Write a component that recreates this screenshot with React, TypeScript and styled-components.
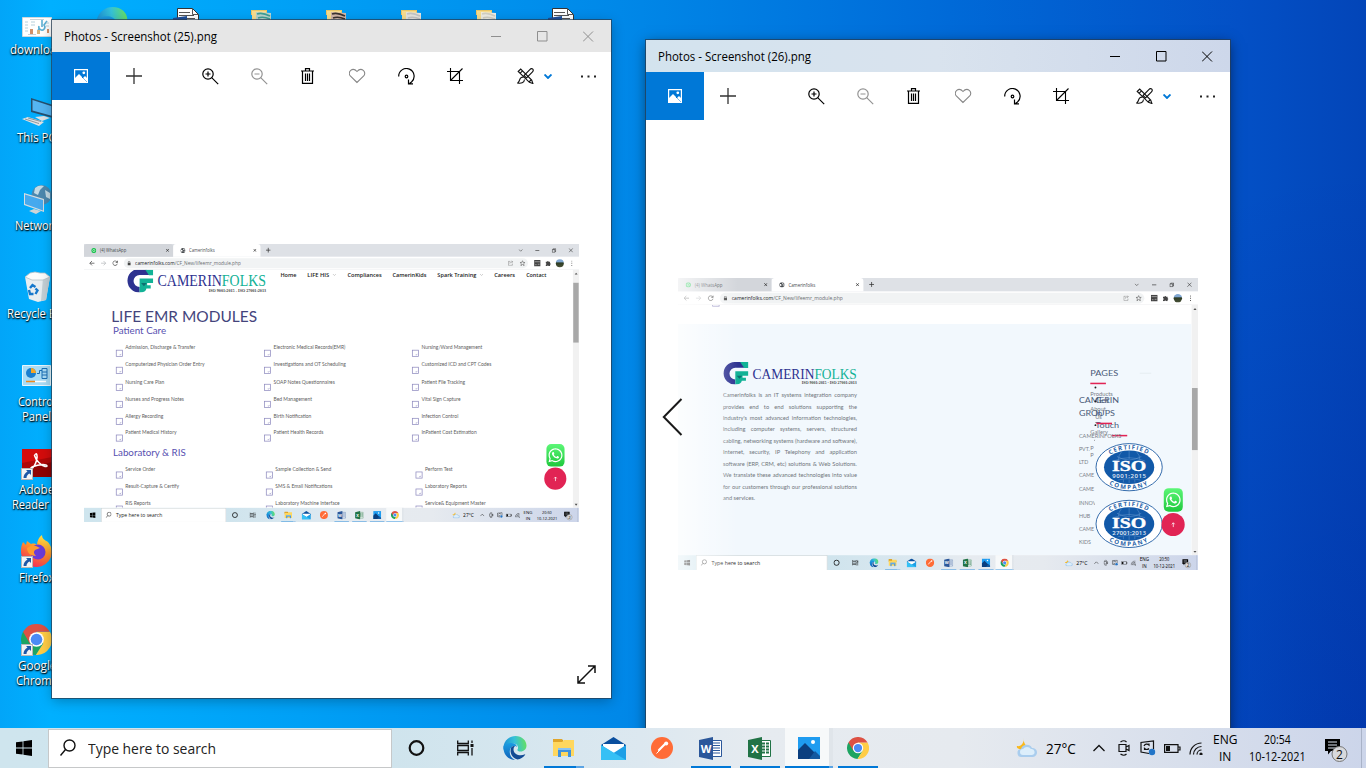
import React, { useLayoutEffect, useRef } from "react";
import styled, { createGlobalStyle, css } from "styled-components";
import { FaWhatsapp } from "react-icons/fa";

const ui = `"Open Sans", "Noto Sans", sans-serif`;
const web = `Lato, "Open Sans", sans-serif`;

const GlobalStyle = createGlobalStyle`
  * { box-sizing: border-box; }
  body { margin: 0; overflow: hidden; font-family: ${ui}; color: #000; }
  svg { display: block; flex: none; }
`;

/* ---------- text squeezed to a known width ---------- */

const FitBox = styled.span<{ $w: number }>`
  display: block;
  flex: none;
  width: ${(p) => p.$w}px;
  white-space: nowrap;
`;
const FitInner = styled.span`
  display: inline-block;
  transform-origin: 0 50%;
`;

function Fit({ w, children }: { w: number; children: React.ReactNode }) {
  const ref = useRef<HTMLSpanElement>(null);
  useLayoutEffect(() => {
    const el = ref.current;
    if (el && el.offsetWidth) el.style.transform = `scaleX(${w / el.offsetWidth})`;
  }, [w]);
  return (
    <FitBox $w={w}>
      <FitInner ref={ref}>{children}</FitInner>
    </FitBox>
  );
}

/* ---------- app icons ---------- */

const Svg = styled.svg.attrs({ fill: "none" })<{ $s?: number }>`
  ${(p) => p.$s && css`width: ${p.$s}px; height: ${p.$s}px;`}
`;

const ChromeIcon = ({ s }: { s: number }) => (
  <Svg $s={s} viewBox="0 0 48 48">
    <path fill="#1da462" d="M3.2 12A24 24 0 0 0 23 48L34.4 30 24 24Z" />
    <path fill="#ffcd46" d="M44.8 12A24 24 0 0 1 23 48L34.4 30 24 12Z" />
    <path fill="#dd5144" d="M3.2 12A24 24 0 0 1 44.8 12H24L13.6 30Z" />
    <circle cx="24" cy="24" r="11.4" fill="#fff" />
    <circle cx="24" cy="24" r="9" fill="#4c8bf5" />
  </Svg>
);

const EdgeIcon = ({ s }: { s: number }) => (
  <Svg $s={s} viewBox="0 0 48 48">
    <defs>
      <linearGradient id="edgeTop" x1="0" y1=".5" x2="1" y2=".4">
        <stop offset="0" stopColor="#1b8fd6" />
        <stop offset=".5" stopColor="#35c1d8" />
        <stop offset="1" stopColor="#66e060" />
      </linearGradient>
      <linearGradient id="edgeLow" x1="0" y1="0" x2="0" y2="1">
        <stop offset="0" stopColor="#1b9de2" />
        <stop offset="1" stopColor="#1060b8" />
      </linearGradient>
    </defs>
    <path fill="url(#edgeTop)" d="M1 20C4 7 14 0 25 0c13 0 22 9 22 19 0 7-5 12-12 12-5 0-7-2-6-4 3-4 0-12-9-12C11 15 4 19 1 28Z" />
    <path fill="url(#edgeLow)" d="M1 21C0 37 11 48 24 48c-9-4-13-14-9-23 2-4 5-5 8-5 2 0 4 1 5 2-1-5-5-8-11-8C9 14 3 17 1 21Z" />
    <path fill="#124a94" d="M16 24c-3 9 2 20 13 23 6-1 11-4 15-9 1-2 0-2-1-1-9 4-22 0-22-10 0-3 1-5 3-7-4 0-7 1-8 4Z" />
  </Svg>
);

const ExplorerIcon = () => (
  <Svg width="22" height="20" viewBox="0 0 22 20">
    <path fill="#d99a12" d="M0 1h9l2 3h10v4H0Z" />
    <path fill="#ffd75e" d="M0 4h9l2-2h10v16H0Z" />
    <path fill="#e0a52a" d="M0 1h9v3H0Z" />
    <path fill="#3f92dd" d="M5 10h13v9h-3v-5H8v5H5Z" />
    <path fill="#8ac4f2" d="M5 10h13v2H5Z" />
  </Svg>
);

const MailIcon = () => (
  <Svg width="25" height="23" viewBox="0 0 25 23">
    <path fill="#0a4f9e" d="M12.500 0 25 8v2L12.500 17 0 10V8Z" />
    <path fill="#fff" d="M2 7h21v4l-10.500 6L2 11Z" />
    <path fill="#1d9fe6" d="M0 8l12.500 8L25 8v15H0Z" />
    <path fill="#35c0f5" d="M0 8l25 15H0Z" />
  </Svg>
);

const PostmanIcon = () => (
  <Svg width="22" height="22" viewBox="0 0 22 22">
    <circle cx="11" cy="11" r="11" fill="#ff6c37" />
    <path stroke="#fff" strokeWidth="2.200" strokeLinecap="round" d="m8 13 6-6" />
    <circle cx="15.200" cy="6.500" r="2" fill="#fff" />
    <path stroke="#fff" strokeWidth="1" d="m5.500 16.500 4-4" />
  </Svg>
);

const OfficeIcon = ({ color, letter }: { color: string; letter: string }) => (
  <Svg width="24" height="23" viewBox="0 0 24 23">
    <path fill="#fff" stroke={color} d="M12 3.500h10.500v16H12Z" />
    {letter === "X" ? (
      <path stroke={color} strokeWidth="1.800" strokeDasharray="3 1" d="M14 6.500h8M14 9.500h8M14 12.500h8M14 15.500h8" />
    ) : (
      <path stroke={color} d="M14 6h7M14 8.500h7M14 11h7M14 13.500h7M14 16h7" />
    )}
    <path fill={color} d="m0 3 14-3v23L0 20Z" />
    <text x="7" y="15.500" fill="#fff" fontFamily="Open Sans" fontSize="11" fontWeight="700" textAnchor="middle">
      {letter}
    </text>
  </Svg>
);

const PhotosIcon = () => (
  <Svg width="22" height="22" viewBox="0 0 22 22">
    <rect width="22" height="22" fill="#1f9cf0" />
    <path fill="#0b3f7f" d="m0 13 7-7 15 15v1H0Z" />
    <path fill="#14599f" d="m11 22 6-8 5 5v3Z" />
    <circle cx="15" cy="5" r="2" fill="#fff" />
  </Svg>
);

const WindowsIcon = () => (
  <Svg width="16" height="16" viewBox="0 0 16 16">
    <path fill="#000" d="m0 2.300 6.600-.9v6.200H0ZM7.400 1.200 16 0v7.600H7.400ZM0 8.400h6.600v6.200L0 13.700ZM7.400 8.400H16V16l-8.600-1.200Z" />
  </Svg>
);

/* ---------- taskbar ---------- */

const Bar = styled.div`
  display: flex;
  height: 40px;
  width: 1366px;
  flex: none;
  position: relative;
  font-family: ${ui};
  color: #000;
  background: linear-gradient(90deg, #cfe5ee 0, #cfe4ed 390px, #dce8f0 640px, #e6ebf0 760px, #e6eaef 960px, #d8dfec 1180px, #ccd5ea 1366px);
`;
const StartCell = styled.div`
  width: 48px;
  display: grid;
  place-items: center;
`;
const Search = styled.div`
  width: 344px;
  height: 39px;
  margin-top: 1px;
  background: #fff;
  border: 1px solid #c6c8c9;
  display: flex;
  align-items: center;
  padding: 0 0 2px 11px;
  gap: 12px;
  font-size: 15px;
  color: #222;
`;
const Apps = styled.div`
  display: flex;
  gap: 1px;
  flex: 1;
  padding-left: 1px;
`;
const AppCell = styled.div<{ $open?: boolean; $active?: boolean; $stack?: boolean }>`
  width: 48px;
  display: grid;
  place-items: center;
  position: relative;
  background: ${(p) => (p.$active ? "linear-gradient(90deg, #f7f9fa 44px, #e0e5ea 44px)" : "none")};
  &::after {
    content: "";
    display: ${(p) => (p.$open ? "block" : "none")};
    position: absolute;
    bottom: 0;
    left: ${(p) => (p.$active ? 0 : 4)}px;
    width: ${(p) => (p.$active ? 48 : 40)}px;
    height: 2px;
    background: ${(p) => (p.$active ? "linear-gradient(90deg,#0078d7 44px,#5ba4e4 44px)" : p.$stack ? "linear-gradient(90deg,#0078d7 32px,#5ba4e4 32px)" : "#0078d7")};
  }
`;
const Tray = styled.div`
  display: flex;
  align-items: center;
  width: 350px;
  font-size: 14px;
`;
const Gap = styled.span<{ $w: number }>`
  flex: none;
  width: ${(p) => p.$w}px;
`;
const Stack = styled.div<{ $w: number }>`
  width: ${(p) => p.$w}px;
  display: flex;
  flex-direction: column;
  align-items: center;
  font-size: 12px;
  line-height: 17px;
`;
const DesktopEdge = styled.span`
  width: 1px;
  height: 40px;
  margin-left: 11px;
  background: #a9b3c8;
`;

function Taskbar({ time, active }: { time: string; active: "photos" | "chrome" }) {
  return (
    <Bar>
      <StartCell>
        <WindowsIcon />
      </StartCell>
      <Search>
        <Svg width="16" height="18" viewBox="0 0 16 18" stroke="#111" strokeWidth="1.400">
          <circle cx="9.500" cy="6.500" r="5.500" />
          <path d="M5.500 10.500 .5 16.500" />
        </Svg>
        <Fit w={128}>Type here to search</Fit>
      </Search>
      <Apps>
        <AppCell>
          <Svg width="18" height="18" viewBox="0 0 18 18">
            <circle cx="8.500" cy="9" r="6.800" stroke="#111" strokeWidth="2.200" />
          </Svg>
        </AppCell>
        <AppCell>
          <Svg width="19" height="16" viewBox="0 0 19 16" stroke="#111" strokeWidth="1.300">
            <path d="M.7.500v3h10.600v-3M.7 15.500v-3h10.600v3M.7 5.500h10.600v5H.7ZM15 .500V3M15 8v7.500" />
            <path strokeWidth="3" d="M15 4v3" />
          </Svg>
        </AppCell>
        <AppCell>
          <EdgeIcon s={24} />
        </AppCell>
        <AppCell $open $stack>
          <ExplorerIcon />
        </AppCell>
        <AppCell>
          <MailIcon />
        </AppCell>
        <AppCell>
          <PostmanIcon />
        </AppCell>
        <AppCell $open>
          <OfficeIcon color="#2b579a" letter="W" />
        </AppCell>
        <AppCell $open>
          <OfficeIcon color="#217346" letter="X" />
        </AppCell>
        <AppCell $open $active={active === "photos"}>
          <PhotosIcon />
        </AppCell>
        <AppCell $open $active={active === "chrome"}>
          <ChromeIcon s={22} />
        </AppCell>
      </Apps>
      <Tray>
        <Svg width="22" height="20" viewBox="0 0 22 20">
          <path fill="#f9b81c" d="M8 0c-1 5 2 9 7 9-2 3-6 4-9 3S0 10 1 8c4 1 7-3 7-8Z" />
          <path fill="#a9cdee" d="M6 19a4 4 0 0 1-1-8 6 6 0 0 1 11-1 4.500 4.500 0 0 1 1 9Z" />
          <path fill="#dceefb" d="M7 17a3 3 0 0 1 0-6 5 5 0 0 1 8 0 3 3 0 0 1 1 6Z" />
        </Svg>
        <Gap $w={8} />
        <Fit w={30}>27°C</Fit>
        <Gap $w={17} />
        <Svg width="12" height="8" viewBox="0 0 12 8" stroke="#111" strokeWidth="1.300">
          <path d="m.5 7 5.500-5.500L11.500 7" />
        </Svg>
        <Gap $w={13} />
        <Svg width="12" height="16" viewBox="0 0 12 16" stroke="#111" strokeWidth="1.200">
          <path d="M1 4.500h7v7H1ZM8 7l3-1.500v5L8 9M2.500 2Q6-.5 8.500 2M2.500 14Q6 16.500 8.500 14" />
        </Svg>
        <Gap $w={9} />
        <Svg width="17" height="16" viewBox="0 0 17 16">
          <path stroke="#111" strokeWidth="1.200" d="M10 13.500 2 12V2.500L14.500 1v8M5 6a3 3 0 0 1 5-1V3.500M10 8.500a3 3 0 0 1-4.500 0v1.500" />
          <circle cx="13" cy="12" r="3.200" fill="#2275c8" />
        </Svg>
        <Gap $w={8} />
        <Svg width="17" height="9" viewBox="0 0 17 9">
          <path stroke="#111" strokeWidth="1.200" d="M.6.6H14v7.800H.6ZM14 3h2v3h-2" />
          <path fill="#111" d="M2 2h4v5H2Z" />
        </Svg>
        <Gap $w={8} />
        <Svg width="14" height="13" viewBox="0 0 14 13" stroke="#111" strokeWidth="1.200">
          <path d="M1 12.500A11.500 11.500 0 0 1 12.500 1M4.500 12.500a8 8 0 0 1 8-8M8 12.500A4.500 4.500 0 0 1 12.500 8" />
          <circle cx="12" cy="12" r="1" fill="#111" />
        </Svg>
        <Gap $w={8} />
        <Stack $w={28}>
          <Fit w={24}>ENG</Fit>
          <Fit w={12}>IN</Fit>
        </Stack>
        <Gap $w={7} />
        <Stack $w={62}>
          <Fit w={27}>{time}</Fit>
          <Fit w={57}>10-12-2021</Fit>
        </Stack>
        <Gap $w={16} />
        <Svg width="26" height="20" viewBox="0 0 26 20" overflow="visible">
          <path fill="#000" d="M1 1h15v12H7l-3 3.500V13H1Z" />
          <path stroke="#dbe2ee" d="M4 4h9M4 7h9M4 10h9" />
          <circle cx="15.500" cy="16" r="7.500" fill="#d8d9dc" stroke="#777" />
          <text x="15.500" y="20.500" fontFamily="Open Sans" fontSize="12" textAnchor="middle" fill="#111">
            2
          </text>
        </Svg>
        <DesktopEdge />
      </Tray>
    </Bar>
  );
}

/* ---------- browser capture shown inside the photo windows ---------- */

const Frame = styled.div<{ $k: number }>`
  width: ${(p) => 1366 * p.$k}px;
  height: ${(p) => 768 * p.$k}px;
  overflow: hidden;
  position: relative;
  flex: none;
`;
const Shot = styled.div<{ $k: number }>`
  width: 1366px;
  height: 768px;
  display: flex;
  flex-direction: column;
  background: #fff;
  transform: scale(${(p) => p.$k});
  transform-origin: 0 0;
`;
const SideFade = styled.div`
  position: absolute;
  inset: 0 auto 0 0;
  width: 60px;
  background: linear-gradient(90deg, rgba(255, 255, 255, 0.75), rgba(255, 255, 255, 0));
`;
const TabStrip = styled.div`
  height: 35px;
  flex: none;
  display: flex;
  align-items: stretch;
  background: #dee1e6;
  font-size: 13px;
  color: #45494d;
`;
const Tab = styled.div<{ $on?: boolean }>`
  width: ${(p) => (p.$on ? 241 : 246)}px;
  display: flex;
  align-items: center;
  gap: 10px;
  padding: 0 11px 0 20px;
  background: ${(p) => (p.$on ? "#fff" : "#d3d6db")};
  border-radius: 8px 8px 0 0;
  & > :last-child { margin-left: auto; }
`;
const StripButtons = styled.div`
  margin-left: auto;
  padding-right: 16px;
  display: flex;
  align-items: center;
  gap: 34px;
`;
const UrlBar = styled.div`
  height: 36px;
  flex: none;
  display: flex;
  align-items: center;
  padding: 0 18px 0 14px;
  gap: 16px;
  border-bottom: 1px solid #e4e6e8;
`;
const Extensions = styled.div`
  display: flex;
  align-items: center;
  gap: 13px;
  & > :last-child { margin-left: 7px; }
`;
const Pill = styled.div`
  flex: 1;
  height: 28px;
  margin: 0 1px 0 0;
  border-radius: 14px;
  background: #f1f3f4;
  display: flex;
  align-items: center;
  padding: 0 7px 0 10px;
  gap: 12px;
  font-size: 14px;
  color: #6a6e72;
  b { font-weight: 400; color: #202124; }
  & > :nth-child(3) { margin: 0 6px 0 auto; }
`;
const Avatar = styled.span`
  width: 22px;
  height: 22px;
  border-radius: 50%;
  background: linear-gradient(#7fa6d0 35%, #2b3a22 45%, #4a5238);
`;
const Body = styled.div`
  flex: 1;
  min-height: 0;
  display: flex;
  position: relative;
  overflow: hidden;
`;
const Page = styled.div`
  flex: 1;
  font-family: ${web};
  overflow: hidden;
  position: relative;
`;
const Rail = styled.div`
  width: 17px;
  background: #f1f1f1;
  display: flex;
  flex-direction: column;
  align-items: center;
`;
const Thumb = styled.div<{ $top: number; $h: number }>`
  width: 15px;
  margin-top: ${(p) => p.$top}px;
  height: ${(p) => p.$h}px;
  background: #a8a8a8;
`;
const Arrow = styled.span<{ $down?: boolean }>`
  border: 4px solid transparent;
  border-${(p) => (p.$down ? "top" : "bottom")}: 5px solid #505050;
  height: 0;
  margin: ${(p) => (p.$down ? "auto 0 2px" : "4px 0 0")};
`;
const Floating = styled.div`
  position: absolute;
  left: 1270px;
  top: 481px;
  display: flex;
  flex-direction: column;
  align-items: center;
  gap: 3px;
`;
const WhatsAppTile = styled.div`
  width: 50px;
  height: 62px;
  border-radius: 13px;
  background: linear-gradient(#5cf777, #1fc83c);
  display: grid;
  place-items: center;
  color: #fff;
  font-size: 44px;
`;
const UpButton = styled.div`
  width: 61px;
  height: 61px;
  border-radius: 50%;
  background: #e12454;
  display: grid;
  place-items: center;
`;

const X = ({ c = "#222" }: { c?: string }) => (
  <Svg width="9" height="9" viewBox="0 0 9 9" stroke={c} strokeWidth="1.800">
    <path d="m.5.500 8 8M8.500.500l-8 8" />
  </Svg>
);

interface CaptureProps {
  k: number;
  thumbTop: number;
  thumbH: number;
  children: React.ReactNode;
}

function Capture({ k, thumbTop, thumbH, children }: CaptureProps) {
  return (
    <Shot $k={k}>
      <TabStrip>
        <Tab>
          <Svg width="14" height="14" viewBox="0 0 14 14">
            <circle cx="7" cy="7" r="7" fill="#16c24a" />
            <circle cx="7" cy="7" r="3" stroke="#fff" strokeWidth="1.500" />
          </Svg>
          <Fit w={73}>(4) WhatsApp</Fit>
          <X />
        </Tab>
        <Tab $on>
          <Svg width="14" height="14" viewBox="0 0 14 14">
            <circle cx="7" cy="7" r="7" fill="#4a4e52" />
            <path fill="#fff" d="M2 5c3 0 4 1 4 3S4 9 4 11C2 9 1 7 2 5ZM8 2c2 0 4 2 4 4-2 1-4 0-4-1s-1-2 0-3ZM9 8h3l-2 4Z" />
          </Svg>
          <Fit w={71}>Camerinfolks</Fit>
          <X />
        </Tab>
        <Gap $w={15} />
        <Svg width="13" height="35" viewBox="0 0 13 35" stroke="#333" strokeWidth="2">
          <path d="M0 17h13M6.500 10.500v13" />
        </Svg>
        <StripButtons>
          <Svg width="12" height="8" viewBox="0 0 12 8" stroke="#444" strokeWidth="1.600">
            <path d="m1 1 5 5 5-5" />
          </Svg>
          <Svg width="12" height="8" viewBox="0 0 12 8" stroke="#222" strokeWidth="1.600">
            <path d="M0 4h12" />
          </Svg>
          <Svg width="12" height="12" viewBox="0 0 12 12" stroke="#222" strokeWidth="1.600">
            <path d="M1 3.500h7.500V11H1ZM3.500 3V1H11v7.500H9" />
          </Svg>
          <Svg width="13" height="13" viewBox="0 0 13 13" stroke="#222" strokeWidth="1.400">
            <path d="m1 1 11 11M12 1 1 12" />
          </Svg>
        </StripButtons>
      </TabStrip>
      <UrlBar>
        <Svg width="16" height="16" viewBox="0 0 16 16" stroke="#444" strokeWidth="2">
          <path d="M15 8H2M8 2 2 8l6 6" />
        </Svg>
        <Svg width="16" height="16" viewBox="0 0 16 16" stroke="#b5b8bb" strokeWidth="2">
          <path d="M1 8h13M8 2l6 6-6 6" />
        </Svg>
        <Svg width="16" height="16" viewBox="0 0 16 16" stroke="#444" strokeWidth="2">
          <path d="M13.500 5A6.300 6.300 0 1 0 14 9.500M14.500 1v5h-5" />
        </Svg>
        <Pill>
          <Svg width="9" height="12" viewBox="0 0 9 12">
            <path fill="#444" d="M0 5h9v7H0Z" />
            <path stroke="#444" strokeWidth="1.500" d="M2 5V3a2.500 2.500 0 0 1 5 0v2" />
          </Svg>
          <Fit w={292}>
            <b>camerinfolks.com</b>/CF_New/lifeemr_module.php
          </Fit>
          <Svg width="14" height="15" viewBox="0 0 14 15" stroke="#777" strokeWidth="1.400">
            <path d="M6 3H1v11h11V9M5 9c0-4 3-5 8-5M10 1l3 3-3 3" />
          </Svg>
          <Svg width="16" height="16" viewBox="0 0 16 16" stroke="#555" strokeWidth="1.500">
            <path d="m8 1 2 5h5l-4 3.500L12.500 15 8 11.500 3.500 15 5 9.500 1 6h5Z" />
          </Svg>
        </Pill>
        <Extensions>
          <Svg width="18" height="18" viewBox="0 0 18 18">
            <path fill="#444" d="M0 0h18v18H0Z" />
            <path stroke="#ddd" strokeWidth="1.500" d="M2 5h14M3 13h4M10 12h5" />
          </Svg>
          <Svg width="16" height="16" viewBox="0 0 16 16">
            <path fill="#444" d="M1 4h4a2 2 0 1 1 4 0h4v4a2 2 0 1 1 0 4v4H9a2 2 0 1 0-4 0H1v-4a2 2 0 1 0 0-4Z" />
          </Svg>
          <Avatar />
          <Svg width="4" height="16" viewBox="0 0 4 16">
            <path fill="#555" d="M1 1h2.500v2.500H1ZM1 7h2.500v2.500H1ZM1 13h2.500v2.500H1Z" />
          </Svg>
        </Extensions>
      </UrlBar>
      <Body>
        <Page>{children}</Page>
        <Rail>
          <Arrow />
          <Thumb $top={thumbTop} $h={thumbH} />
          <Arrow $down />
        </Rail>
        <Floating>
          <WhatsAppTile>
            <FaWhatsapp />
          </WhatsAppTile>
          <UpButton>
            <Svg width="12" height="14" viewBox="0 0 12 14" stroke="#fff" strokeWidth="2">
              <path d="M6 14V2M2 6l4-4 4 4" />
            </Svg>
          </UpButton>
        </Floating>
      </Body>
      <Taskbar time="20:50" active="chrome" />
    </Shot>
  );
}

/* ---------- Camerinfolks logo ---------- */

const LogoRow = styled.div<{ $k: number }>`
  display: flex;
  font-family: "Liberation Serif", serif;
  gap: ${(p) => 12 * p.$k}px;
`;
const LogoText = styled.div<{ $k: number }>`
  display: flex;
  flex-direction: column;
  align-items: flex-end;
  padding-top: ${(p) => 15 * p.$k}px;
  font-size: ${(p) => 44 * p.$k}px;
  line-height: ${(p) => 40 * p.$k}px;
  color: #2d3290;
  i { font-style: normal; color: #12b296; }
`;
const IsoLine = styled.div<{ $k: number }>`
  font-size: ${(p) => 13 * p.$k}px;
  line-height: ${(p) => 10 * p.$k}px;
  font-weight: 700;
  color: #444;
`;

const Logo = ({ k }: { k: number }) => (
  <LogoRow $k={k}>
    <Svg width={73 * k} height={66 * k} viewBox="0 0 74 66">
      <path fill="#2d3290" d="M34 0H56L63 17H36A17 17 0 1 0 36 51V66A33 33 0 1 1 34 0Z" />
      <path fill="#12b296" d="M50 0H74V18H62Z" />
      <path fill="#12b296" d="M36 27H74V40H57V46H67V55H55C54 62 48 66 36 66V52Z" />
      <path fill="#0b6f70" d="M40 40h16l-8 9Z" />
    </Svg>
    <LogoText $k={k}>
      <Fit w={299 * k}>
        CAMERIN<i>FOLKS</i>
      </Fit>
      <IsoLine $k={k}>
        <Fit w={158 * k}>ISO 9001:2015 - ISO 27001:2013</Fit>
      </IsoLine>
    </LogoText>
  </LogoRow>
);

/* ---------- modules page ---------- */

const SiteHeader = styled.div`
  display: flex;
  padding-left: 118px;
  height: 64px;
  margin-top: -3px;
`;
const Nav = styled.nav`
  display: flex;
  height: 20px;
  margin: 8px 0 0 40px;
  align-items: center;
  font: 600 16px/20px ${ui};
  color: #222;
  white-space: nowrap;
`;
const PageTitle = styled.h1`
  margin: 41px 0 0 75px;
  font: 400 42px/50px ${web};
  color: #44447c;
`;
const Section = styled.h2<{ $top: number }>`
  margin: ${(p) => p.$top}px 0 0 80px;
  font: 400 25px/24px ${web};
  color: #5750b0;
`;
const ModuleGrid = styled.div<{ $cols: string; $rows: string; $top: number }>`
  display: grid;
  grid-template-columns: ${(p) => p.$cols};
  grid-template-rows: ${(p) => p.$rows};
  margin-top: ${(p) => p.$top}px;
  padding-left: 88px;
`;
const Module = styled.div`
  display: flex;
  align-items: center;
  font-size: 13.700px;
  color: #606060;
  white-space: nowrap;
`;
const Tick = styled.span`
  width: 19px;
  height: 19px;
  border: 2px solid #8d89be;
  margin: 32px 7px 0 0;
  display: grid;
  place-items: end;
  padding: 1px;
`;

const patientCare = [
  "Admission, Discharge & Transfer", "Electronic Medical Records(EMR)", "Nursing/Ward Management",
  "Computerized Physician Order Entry", "Investigations and OT Scheduling", "Customized ICD and CPT Codes",
  "Nursing Care Plan", "SOAP Notes Questionnaires", "Patient File Tracking",
  "Nurses and Progress Notes", "Bed Management", "Vital Sign Capture",
  "Allergy Recording", "Birth Notification", "Infection Control",
  "Patient Medical History", "Patient Health Records", "InPatient Cost Estimation",
];
const laboratory = [
  "Service Order", "Sample Collection & Send", "Perform Test",
  "Result-Capture & Certify", "SMS & Email Notifications", "Laboratory Reports",
  "RIS Reports", "Laboratory Machine Interface", "Service& Equipment Master",
];

const Modules = ({ items }: { items: string[] }) => (
  <>
    {items.map((name) => (
      <Module key={name}>
        <Tick>
          <Svg width="7" height="6" viewBox="0 0 8 7" stroke="#5a55a0" strokeWidth="1.500">
            <path d="m1 4 2 2 4-5" />
          </Svg>
        </Tick>
        {name}
      </Module>
    ))}
  </>
);

const Caret = () => (
  <Svg width="20" height="8" viewBox="0 0 20 8" stroke="#aaa" strokeWidth="1.600">
    <path d="m10 1 4 4 4-4" />
  </Svg>
);

const ModulesPage = () => (
  <>
    <SiteHeader>
      <Logo k={1} />
      <Nav>
        <Fit w={44}>Home</Fit>
        <Gap $w={30} />
        <Fit w={61}>LIFE HIS</Fit>
        <Caret />
        <Gap $w={30} />
        <Fit w={94}>Compliances</Fit>
        <Gap $w={30} />
        <Fit w={94}>CamerinKids</Fit>
        <Gap $w={30} />
        <Fit w={108}>Spark Training</Fit>
        <Caret />
        <Gap $w={29} />
        <Fit w={57}>Careers</Fit>
        <Gap $w={31} />
        <Fit w={56}>Contact</Fit>
      </Nav>
    </SiteHeader>
    <PageTitle>
      <Fit w={402}>LIFE EMR MODULES</Fit>
    </PageTitle>
    <Section $top={4}>
      <Fit w={147}>Patient Care</Fit>
    </Section>
    <ModuleGrid $top={11} $cols="409px 408px 1fr" $rows="repeat(5, 47px) 44px">
      <Modules items={patientCare} />
    </ModuleGrid>
    <Section $top={22}>
      <Fit w={201}>Laboratory &amp; RIS</Fit>
    </Section>
    <ModuleGrid $top={11} $cols="414px 413px 1fr" $rows="repeat(3, 47px)">
      <Modules items={laboratory} />
    </ModuleGrid>
  </>
);

/* ---------- footer page ---------- */

const Footer = styled.div`
  margin-top: 50px;
  height: 607px;
  background: #f2f8fd;
  padding: 99px 0 0 118px;
`;
const About = styled.div`
  width: 352px;
  margin-top: 13px;
  font: 400 15px/29.900px ${web};
  color: #70767c;
`;
const AboutLine = styled.div`
  text-align: justify;
  text-align-last: justify;
  white-space: nowrap;
  &:last-child { text-align-last: left; }
`;
const Loose = styled.span<{ $x: number; $y: number; $kind?: "head" | "org" }>`
  position: absolute;
  left: ${(p) => p.$x}px;
  top: ${(p) => p.$y - 82}px;
  white-space: nowrap;
  line-height: 20px;
  font-size: ${(p) => (p.$kind === "head" ? 22 : p.$kind === "org" ? 14 : 15)}px;
  color: ${(p) => (p.$kind === "head" ? "#4a5a78" : "#7a8088")};
`;
const Rule = styled.span<{ $x: number; $y: number }>`
  position: absolute;
  left: ${(p) => p.$x}px;
  top: ${(p) => p.$y - 73}px;
  width: 41px;
  height: 4px;
  background: #e12454;
`;
const Dot = styled.span<{ $y: number }>`
  position: absolute;
  left: 1094px;
  top: ${(p) => p.$y - 73}px;
  width: 5px;
  height: 5px;
  border-radius: 50%;
  background: #222;
`;
const FaintRule = styled.span`
  position: absolute;
  left: 1213px;
  top: 178px;
  width: 30px;
  height: 2px;
  background: #e3e9ee;
`;
const Badges = styled.div`
  position: absolute;
  left: 1095px;
  top: 352px;
  background: #f2f8fd;
`;
const PriorTick = styled.span`
  position: absolute;
  left: 90px;
  top: -15px;
  width: 19px;
  height: 19px;
  border: 2px solid #8d89be;
`;

const IsoBadge = ({ id, code }: { id: string; code: string }) => (
  <Svg width="180" height="149" viewBox="0 -10 180 149">
    <ellipse cx="90" cy="64" rx="87" ry="62" fill="#fff" stroke="#2a64a8" strokeWidth="2.500" />
    <ellipse cx="90" cy="64" rx="66" ry="44" fill="#1259a8" />
    <path stroke="#6fa0d4" strokeWidth="1.200" d="M58 36q32 18 64 0M48 48q42-18 84 0M90 21v22M70 24q-8 8-8 20M110 24q8 8 8 20M60 98q30-8 60 0M75 104V96M105 104V96M90 106V96" />
    <text x="90" y="74" fill="#fff" stroke="#fff" fontFamily="Liberation Serif" fontWeight="700" fontSize="41" textAnchor="middle" textLength="90" lengthAdjust="spacingAndGlyphs">
      ISO
    </text>
    <path id={`${id}t`} d="M20 64A70 47 0 0 1 160 64" />
    <path id={`${id}b`} d="M8 64A82 58 0 0 0 172 64" />
    <g fill="#2a64a8" fontFamily="Open Sans" fontWeight="700" fontSize="16">
      <text letterSpacing="3" textAnchor="middle">
        <textPath href={`#${id}t`} startOffset="50%">CERTIFIED</textPath>
      </text>
      <text letterSpacing="4" textAnchor="middle">
        <textPath href={`#${id}b`} startOffset="50%">COMPANY</textPath>
      </text>
    </g>
    <text x="90" y="93" fill="#e2ecf6" fontFamily="Open Sans" fontSize="16" fontWeight="600" textAnchor="middle" textLength="88">
      {code}
    </text>
  </Svg>
);

const aboutLines = [
  "Camerinfolks is an IT systems integration company",
  "provides end to end solutions supporting the",
  "industry's most advanced information technologies,",
  "including computer systems, servers, structured",
  "cabling, networking systems (hardware and software),",
  "Internet, security, IP Telephony and application",
  "software (ERP, CRM, etc) solutions & Web Solutions.",
  "We translate these advanced technologies into value",
  "for our customers through our professional solutions",
  "and services.",
];
const groups = ["CAMERINFOLKS", "PVT.", "LTD", "CAME", "CAME", "INNOV", "HUB", "CAME", "KIDS"];

const FooterPage = () => (
  <>
    <Footer>
      <Logo k={0.915} />
      <About>
        {aboutLines.map((line) => (
          <AboutLine key={line}>{line}</AboutLine>
        ))}
      </About>
    </Footer>
    <PriorTick />
    <Loose $x={1083} $y={250} $kind="head"><Fit w={73}>PAGES</Fit></Loose>
    <FaintRule />
    <Rule $x={1083} $y={277} />
    <Dot $y={287} />
    <Loose $x={1083} $y={305}><Fit w={59}>Products</Fit></Loose>
    <Loose $x={1053} $y={322} $kind="head"><Fit w={105}>CAMERIN</Fit></Loose>
    <Loose $x={1053} $y={355} $kind="head"><Fit w={95}>GROUPS</Fit></Loose>
    <Loose $x={1096} $y={322} $kind="head">Get</Loose>
    <Loose $x={1096} $y={355} $kind="head">In</Loose>
    <Loose $x={1096} $y={388} $kind="head"><Fit w={63}>Touch</Fit></Loose>
    <Dot $y={324} />
    <Loose $x={1083} $y={344}>About</Loose>
    <Loose $x={1096} $y={365}>Us</Loose>
    <Rule $x={1099} $y={382} />
    <Dot $y={386} />
    <Loose $x={1083} $y={405}>Gallery</Loose>
    <Rule $x={1139} $y={414} />
    <Dot $y={426} />
    <Loose $x={1083} $y={446}>P</Loose>
    <Loose $x={1083} $y={465}>P</Loose>
    {groups.map((g, i) => (
      <Loose key={i} $x={1053} $y={415 + i * 35.1} $kind="org">
        {i === 0 ? <Fit w={111}>{g}</Fit> : g}
      </Loose>
    ))}
    <Badges>
      <IsoBadge id="isoA" code="9001:2015" />
      <IsoBadge id="isoB" code="27001:2013" />
    </Badges>
  </>
);

/* ---------- photo viewer window ---------- */

const Win = styled.div<{ $x: number; $y: number; $w: number; $h: number; $z: number }>`
  position: absolute;
  left: ${(p) => p.$x}px;
  top: ${(p) => p.$y}px;
  width: ${(p) => p.$w}px;
  height: ${(p) => p.$h}px;
  z-index: ${(p) => p.$z};
  background: #fff;
  display: flex;
  flex-direction: column;
  box-shadow: 0 0 0 1px rgba(40, 60, 80, 0.7), 0 3px 12px rgba(0, 0, 0, ${(p) => (p.$z > 1 ? 0.5 : 0.28)});
`;
const TitleBar = styled.div<{ $focused: boolean }>`
  height: 32px;
  flex: none;
  display: flex;
  align-items: center;
  justify-content: space-between;
  padding: 0 17px 0 12px;
  font-size: 12px;
  background: ${(p) => (p.$focused ? "linear-gradient(90deg, #d3e3ee, #d9e3ee 50%, #cdd7ea)" : "#e6e6e6")};
`;
const Controls = styled.div<{ $c: string }>`
  display: flex;
  gap: 35px;
  svg { stroke: ${(p) => p.$c}; }
`;
const Tools = styled.div`
  height: 48px;
  flex: none;
  display: flex;
  align-items: center;
`;
const Collection = styled.div`
  width: 58px;
  height: 48px;
  background: #0078d7;
  display: grid;
  place-items: center;
`;
const Slot = styled.div<{ $w: number; $faint?: boolean }>`
  width: ${(p) => p.$w}px;
  display: grid;
  place-items: center;
  opacity: ${(p) => (p.$faint ? 0.42 : 1)};
`;
const Canvas = styled.div<{ $top: number; $left: number }>`
  flex: 1;
  min-height: 0;
  padding: ${(p) => p.$top}px 0 0 ${(p) => p.$left}px;
`;
const Expand = styled.div`
  position: absolute;
  right: 15px;
  bottom: 14px;
`;
const Previous = styled.div`
  position: absolute;
  left: 16px;
  top: 358px;
`;

interface WindowProps {
  title: string;
  focused: boolean;
  gapA: number;
  gapB: number;
}

const WindowHead = ({ title, focused, gapA, gapB }: WindowProps) => (
  <>
    <TitleBar $focused={focused}>
      <Fit w={153}>{title}</Fit>
      <Controls $c={focused ? "#000" : "#8f8f8f"}>
        <Svg width="11" height="11" viewBox="0 0 11 11"><path d="M0 5.500h10" /></Svg>
        <Svg width="11" height="11" viewBox="0 0 11 11"><path d="M.5.500h9.500v9.500H.5Z" /></Svg>
        <Svg width="11" height="11" viewBox="0 0 11 11"><path d="m0 .500 10 10M10 .500l-10 10" /></Svg>
      </Controls>
    </TitleBar>
    <Tools>
      <Collection>
        <Svg width="14" height="14" viewBox="0 0 14 14">
          <path stroke="#fff" strokeWidth="1.200" d="M.6.6h12.800v12.800H.6Z" />
          <path fill="#fff" d="M1 9l4-4 8.500 8.500H1Z" />
          <path stroke="#0078d7" d="m8 8 5 5" />
          <circle cx="9.800" cy="3.800" r="1.400" fill="#fff" />
          <path fill="#fff" d="m9 9 2-2 3 3v4Z" />
        </Svg>
      </Collection>
      <Slot $w={48}>
        <Svg width="16" height="16" viewBox="0 0 16 16" stroke="#333" strokeWidth="1.300"><path d="M0 8h16M8 0v16" /></Svg>
      </Slot>
      <Gap $w={gapA} />
      <Slot $w={49}>
        <Svg width="17" height="17" viewBox="0 0 17 17" stroke="#000" strokeWidth="1.200">
          <circle cx="6" cy="6" r="5.200" /><path d="m9.700 9.700 6.500 6.500M3.500 6h5M6 3.500v5" />
        </Svg>
      </Slot>
      <Slot $w={49} $faint>
        <Svg width="17" height="17" viewBox="0 0 17 17" stroke="#000" strokeWidth="1.200">
          <circle cx="6" cy="6" r="5.200" /><path d="m9.700 9.700 6.500 6.500M3.500 6h5" />
        </Svg>
      </Slot>
      <Slot $w={49}>
        <Svg width="15" height="16" viewBox="0 0 15 16" stroke="#000" strokeWidth="1.200">
          <path d="M0 3h13M4.500 3V.6h4V3M1.500 3v12.400h10V3M4.500 5.500v7.500M6.500 5.500v7.500M8.500 5.500v7.500" />
        </Svg>
      </Slot>
      <Slot $w={49}>
        <Svg width="17" height="16" viewBox="0 0 17 16" stroke="#888" strokeWidth="1.100">
          <path d="M8 14.500 1.300 8C-2 4 3.500 -1.500 8 3.500 12.500-1.500 18 4 14.700 8Z" />
        </Svg>
      </Slot>
      <Slot $w={49}>
        <Svg width="17" height="17" viewBox="0 0 17 17" stroke="#000" strokeWidth="1.200">
          <path d="M.7 8.500a7.700 7.700 0 1 1 12.800 5.500l-2 1.500M10.500 11.500v4.300h4.500" /><circle cx="8.500" cy="8.500" r="1.300" />
        </Svg>
      </Slot>
      <Slot $w={49}>
        <Svg width="18" height="16" viewBox="0 0 18 16" stroke="#000" strokeWidth="1.100">
          <path d="M3.500 0v12.500H16M0 3.500h12.500V16M4 12 15.500.500" />
        </Svg>
      </Slot>
      <Gap $w={gapB} />
      <Slot $w={18}>
        <Svg width="17" height="16" viewBox="0 0 17 16" stroke="#111" strokeWidth="1.100">
          <path d="M1.200 3.500 3.700 1l11 11 1.200 3.500-3.500-1.200ZM3 5.300 5.500 2.800M12 14l2.500-2.500" />
          <path d="M15.800 1.200c-.8-.9-2-.6-2.700.1L7 7.500 9.500 10l6-6.200c.8-.8 1-1.800.3-2.600ZM6.500 9.500c-1.500-.8-3 0-3.500 1.500S2 14 .8 15c3 .6 6.500 0 6.700-3.500" />
        </Svg>
      </Slot>
      <Gap $w={10} />
      <Svg width="8" height="5" viewBox="0 0 8 5" stroke="#0078d7" strokeWidth="1.900"><path d="m.5.500 3.500 3.500L7.500.500" /></Svg>
      <Gap $w={29} />
      <Svg width="15" height="3" viewBox="0 0 15 3"><path fill="#222" d="M0 .500h2v2H0ZM6.500.500h2v2h-2ZM13 .500h2v2h-2Z" /></Svg>
    </Tools>
  </>
);

/* ---------- desktop ---------- */

const Desktop = styled.div`
  position: relative;
  width: 1366px;
  height: 768px;
  overflow: hidden;
  display: flex;
  flex-direction: column;
  background:
    radial-gradient(ellipse 420px 600px at 100% 100%, rgba(0, 20, 140, 0.28), rgba(0, 20, 140, 0)),
    linear-gradient(90deg, #02a5f8 0, #00b0ff 50px, #00a0f6 300px, #0088e8 620px, #006ad8 950px, #0350c6 1240px, #0345b8 1366px);
`;
const IconGrid = styled.div`
  flex: 1;
  min-height: 0;
  padding-top: 7px;
  display: grid;
  grid-template-columns: repeat(8, 75px);
  grid-auto-rows: 88px;
  align-content: start;
`;
const Shortcut = styled.div<{ $row: number; $col: number }>`
  grid-row: ${(p) => p.$row};
  grid-column: ${(p) => p.$col};
  display: flex;
  flex-direction: column;
  align-items: center;
  padding-right: 2px;
`;
const IconBox = styled.div<{ $drop?: number }>`
  height: 32px;
  width: 32px;
  display: grid;
  place-items: center;
  position: relative;
  margin-bottom: 3px;
  padding-top: ${(p) => p.$drop ?? 0}px;
`;
const Label = styled.div`
  font-size: 12px;
  line-height: 15px;
  color: #fff;
  text-shadow: 0 1px 2px #000, 1px 1px 1px rgba(0, 0, 0, 0.8);
`;
const LinkArrow = styled.span`
  position: absolute;
  left: 0;
  bottom: -1px;
  width: 12px;
  height: 12px;
  background: #f4f4f4;
  border: 1px solid #b8b8b8;
  display: grid;
  place-items: center;
`;

const Link = () => (
  <LinkArrow>
    <Svg width="8" height="8" viewBox="0 0 8 8">
      <path fill="#1f58a8" d="M3 0h5v5L6.500 3.500C4.500 4.500 3.500 6 3.500 8H.5C.5 5 2 3 4.500 1.500Z" />
    </Svg>
  </LinkArrow>
);

const DownloadIcon = () => (
  <Svg width="30" height="20" viewBox="0 0 30 20">
    <path fill="#fff" stroke="#cfd8dd" d="M.5.500h29v19H.5Z" />
    <path stroke="#5cb0d4" strokeWidth="1.600" d="M20 3v7M17 9a3 3 0 1 0 5-1l3-4M16 13l2-2" />
    <path fill="#d0906a" d="M8 12h3v5H8ZM25 12h2v4h-2Z" />
    <path fill="#d9b47a" d="M15 13h3v4h-3Z" />
    <path stroke="#b5d0dc" d="M3 5h3M3 8h3M3 11h3M3 14h3M9 5h4M9 8h4M24 6h3M24 9h3" />
    <path stroke="#c7d2d8" d="M8 2.500h14M6 17.500h8" />
  </Svg>
);
const PcIcon = ({ net }: { net?: boolean }) => (
  <Svg width="32" height="32" viewBox="0 0 32 32">
    {net && <circle cx="20.500" cy="12" r="10" fill="#4c88ae" />}
    {net && <path fill="#c3dbe6" d="M14 5c3-3 7-3 9-2l-4 4-2 5-4-2ZM24 7l5 3v6l-4-2Z" />}
    {net ? (
      <>
        <path fill="#d7dde0" d="m3 10 20 6v13L3 22Z" />
        <path fill="#46a9ee" d="m4 11.500 18 5.500v10.500L4 21Z" />
        <path fill="#cfd4d6" d="m8 28 5-2 7 2-5 3Z" />
      </>
    ) : (
      <>
        <path fill="#26506f" d="m10 3 22 7v13L10 17Z" />
        <path fill="#55b5f2" d="m11.500 5 20 6.500V21l-20-5.500Z" />
        <path fill="#dfe3e5" d="m14 22 9-1 6 2-8 3ZM1 24l6-2 16 5-5 4Z" />
        <path stroke="#8e979c" d="m4 24 14 4.500M7 23l13 3.500" />
      </>
    )}
  </Svg>
);
const BinIcon = () => (
  <Svg width="28" height="32" viewBox="0 0 28 32">
    <path fill="#e8eef1" d="M2 6h25l-4 23-8 2-9-3Z" />
    <path fill="#c4d0d6" d="m20 7 7-1-4 23-5 1Z" />
    <path fill="#fbfcfc" stroke="#b4c0c6" strokeWidth=".8" d="m2 6 5-4 5-1 5 1 5 0 5 4-7 3H9Z" />
    <path stroke="#1678cc" strokeWidth="2.400" d="m7 17 2.500-3 3 2M6 19l1 4h3.500M12.500 23l2-3.500-2-2" />
  </Svg>
);
const PanelIcon = () => (
  <Svg width="29" height="21" viewBox="0 0 29 21">
    <path fill="#a9dcf6" stroke="#e8f6fd" d="M.5.500h28v20H.5Z" />
    <circle cx="9" cy="8" r="5" fill="#1a7fcf" />
    <path fill="#f6a623" d="M9 8V3a5 5 0 0 1 5 5Z" />
    <path stroke="#1a6fb5" d="M15 8.500h2.500V5.500H20M20 3.500h5v10h-5ZM20 7h5M20 10h5" />
    <path stroke="#f08a1d" strokeWidth="1.500" d="M4 16.500h9" />
    <path stroke="#fff" strokeWidth="1.500" d="M13 16.500h11" />
  </Svg>
);
const AcrobatIcon = () => (
  <Svg width="30" height="28" viewBox="0 0 30 28">
    <path fill="#d40c0c" d="M0 0h30v28H0Z" />
    <path fill="#8e0303" d="M0 20 30 12v16H0Z" />
    <path fill="#b00808" d="M0 14 30 8v5L0 21Z" />
    <path stroke="#fff" strokeWidth="1.500" d="M12.500 6.500c2-4 3.500 0 2 5-1 4-4 9-5.500 8.500-2-1 4-4 12-4.500 5 0 5 2.500 2 2-4-.8-9-6-10.500-11Z" />
  </Svg>
);
const FirefoxIcon = () => (
  <Svg width="32" height="32" viewBox="0 0 32 32">
    <defs>
      <linearGradient id="fox" x1=".8" y1="0" x2=".3" y2="1">
        <stop offset="0" stopColor="#fff04a" />
        <stop offset=".45" stopColor="#ff9328" />
        <stop offset="1" stopColor="#f0255a" />
      </linearGradient>
    </defs>
    <path fill="url(#fox)" d="M2 7l3 3 1-4 4 3c3-1 5 0 6 1 0-4 2-8 5-10 0 4 3 5 6 7 4 5 5 10 3 15A15.500 15.500 0 0 1 1 22C-1 17 0 11 2 7Z" />
    <circle cx="17" cy="17" r="7.500" fill="#6a3bd8" />
    <path fill="#ff9a2c" d="M6 13c4-3 7-3 9-2l4 2-5 2c-2 2-1 4 1 6-5 0-9-3-9-8Z" />
  </Svg>
);
const DocIcon = () => (
  <Svg width="28" height="32" viewBox="0 0 28 32">
    <path fill="#fff" stroke="#333" d="M4.500 1.500h15l6 6v24h-21Z" />
    <path stroke="#555" d="M6 5.500h11M6 8.500h15M14 11.500h8M19.500 1.500v6h6" />
    <path fill="#1f4e99" d="m0 11 14-2v18H0Z" />
  </Svg>
);
const FolderIcon = ({ inner, ink }: { inner: string; ink: string }) => (
  <Svg width="24" height="26" viewBox="0 0 24 26">
    <path fill="#e9c76a" d="M1 0h16v5H1Z" />
    <path fill="#f8de90" d="M2 1h14v25H2Z" />
    <path fill={inner} d="m6 2 15 1v20H6Z" />
    <path stroke={ink} strokeWidth="1.600" d="M7 4q5-2 13 2M8 8q5-2 12 1" />
  </Svg>
);

const leftIcons: { lines: string[]; icon: React.ReactNode; link?: boolean; drop?: number }[] = [
  { lines: ["download"], icon: <DownloadIcon />, drop: 8 },
  { lines: ["This PC"], icon: <PcIcon /> },
  { lines: ["Network"], icon: <PcIcon net /> },
  { lines: ["Recycle Bin"], icon: <BinIcon /> },
  { lines: ["Control", "Panel"], icon: <PanelIcon /> },
  { lines: ["Adobe", "Reader XI"], icon: <AcrobatIcon />, link: true },
  { lines: ["Firefox"], icon: <FirefoxIcon />, link: true },
  { lines: ["Google", "Chrome"], icon: <ChromeIcon s={31} />, link: true },
];
const labelWidths: Record<string, number> = {
  download: 53, "This PC": 39, Network: 44, "Recycle Bin": 59, Control: 38, Panel: 29,
  Adobe: 35, "Reader XI": 49, Firefox: 35, Google: 38, Chrome: 42,
};
const topIcons = [
  <EdgeIcon s={32} />,
  <DocIcon />,
  <FolderIcon inner="#b9d4cf" ink="#3f9f96" />,
  <FolderIcon inner="#d3b7a8" ink="#3a3230" />,
  <FolderIcon inner="#e6e6e2" ink="#c4c6c6" />,
  <FolderIcon inner="#efeee6" ink="#d2d0c4" />,
  <DocIcon />,
];

const TaskbarLayer = styled.div`
  position: relative;
  z-index: 3;
`;

export default function App() {
  return (
    <Desktop>
      <GlobalStyle />
      <IconGrid>
        {leftIcons.map((it, i) => (
          <Shortcut key={i} $row={i + 1} $col={1}>
            <IconBox $drop={it.drop}>
              {it.icon}
              {it.link && <Link />}
            </IconBox>
            {it.lines.map((l) => (
              <Label key={l}>
                <Fit w={labelWidths[l]}>{l}</Fit>
              </Label>
            ))}
          </Shortcut>
        ))}
        {topIcons.map((icon, i) => (
          <Shortcut key={i} $row={1} $col={i + 2}>
            <IconBox>{icon}</IconBox>
          </Shortcut>
        ))}
      </IconGrid>

      <Win $x={52} $y={20} $w={559} $h={678} $z={1}>
        <WindowHead title="Photos - Screenshot (25).png" focused={false} gapA={28} gapB={36} />
        <Canvas $top={144} $left={32}>
          <Frame $k={0.3624}>
            <Capture k={0.3624} thumbTop={23} thumbH={165}>
              <ModulesPage />
            </Capture>
          </Frame>
        </Canvas>
        <Expand>
          <Svg width="19" height="19" viewBox="0 0 19 19" stroke="#111" strokeWidth="1.500">
            <path d="M1.500 17.500 17.500 1.500M11 1h7v7M1 11v7h7" />
          </Svg>
        </Expand>
      </Win>

      <Win $x={646} $y={40} $w={584} $h={700} $z={2}>
        <WindowHead title="Photos - Screenshot (26).png" focused gapA={40} gapB={49} />
        <Canvas $top={158} $left={32}>
          <Frame $k={0.3807}>
            <Capture k={0.3807} thumbTop={205} thumbH={163}>
              <FooterPage />
            </Capture>
            <SideFade />
          </Frame>
        </Canvas>
        <Previous>
          <Svg width="21" height="38" viewBox="0 0 21 38" stroke="#1a1a1a" strokeWidth="2">
            <path d="M19.500 1 1.800 19l17.700 18" />
          </Svg>
        </Previous>
      </Win>

      <TaskbarLayer>
        <Taskbar time="20:54" active="photos" />
      </TaskbarLayer>
    </Desktop>
  );
}
